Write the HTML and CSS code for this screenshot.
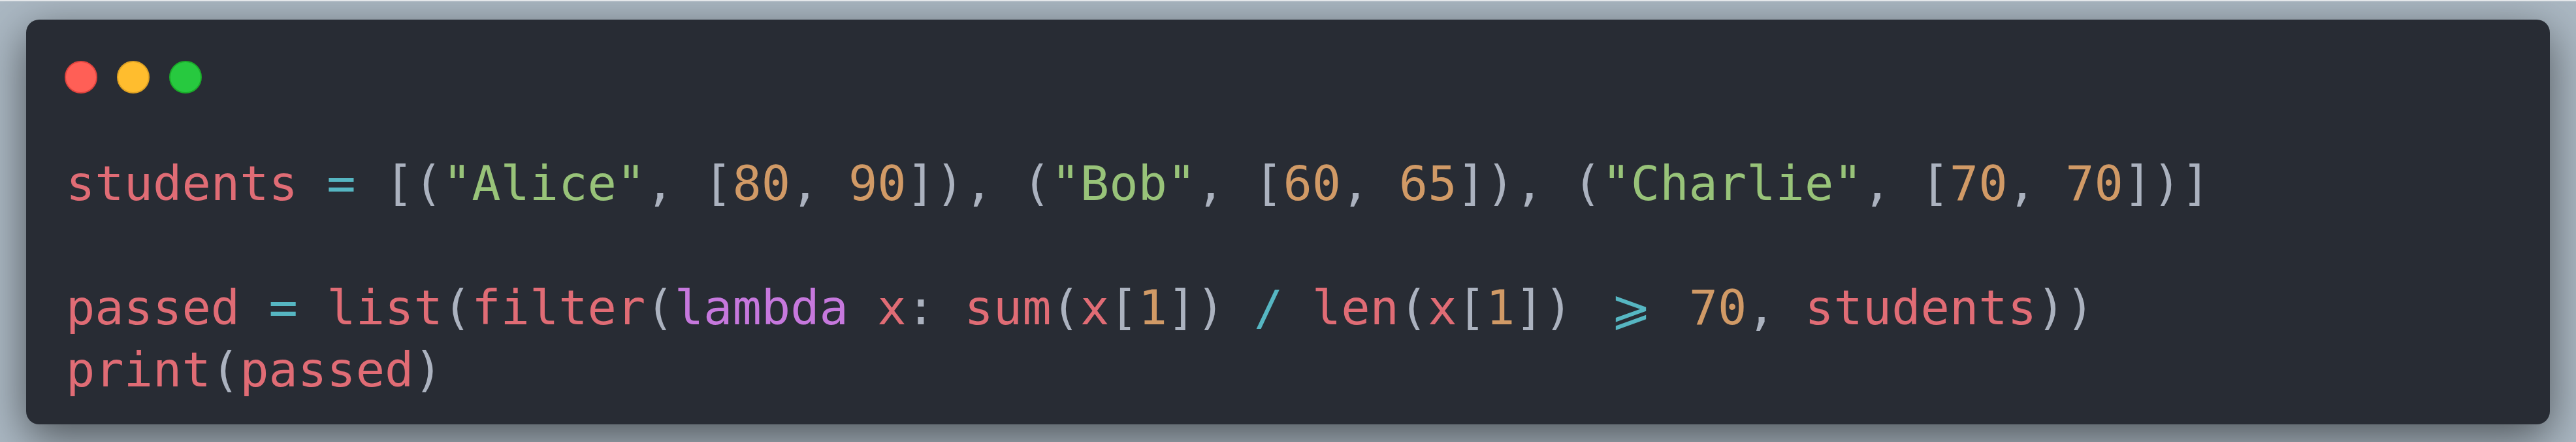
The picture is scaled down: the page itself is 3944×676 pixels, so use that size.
FILE: index.html
```html
<!DOCTYPE html>
<html lang="en">
<head>
<meta charset="utf-8">
<title>Code snippet</title>
<link rel="stylesheet" href="styles.css">
</head>
<body>
<div class="stage">
  <div class="window">
    <div class="controls">
      <span class="dot dot-red"></span>
      <span class="dot dot-yellow"></span>
      <span class="dot dot-green"></span>
    </div>
<pre class="code"><code><span class="v">students</span> <span class="op">=</span> <span class="p">[(</span><span class="s">"Alice"</span><span class="p">, [</span><span class="n">80</span><span class="p">, </span><span class="n">90</span><span class="p">]), (</span><span class="s">"Bob"</span><span class="p">, [</span><span class="n">60</span><span class="p">, </span><span class="n">65</span><span class="p">]), (</span><span class="s">"Charlie"</span><span class="p">, [</span><span class="n">70</span><span class="p">, </span><span class="n">70</span><span class="p">])]</span>

<span class="v">passed</span> <span class="op">=</span> <span class="v">list</span><span class="p">(</span><span class="v">filter</span><span class="p">(</span><span class="k">lambda</span> <span class="v">x</span><span class="p">:</span> <span class="v">sum</span><span class="p">(</span><span class="v">x</span><span class="p">[</span><span class="n">1</span><span class="p">])</span> <span class="op">/</span> <span class="v">len</span><span class="p">(</span><span class="v">x</span><span class="p">[</span><span class="n">1</span><span class="p">])</span> <span class="op lig">⩾</span> <span class="n">70</span><span class="p">,</span> <span class="v">students</span><span class="p">))</span>
<span class="v">print</span><span class="p">(</span><span class="v">passed</span><span class="p">)</span></code></pre>
  </div>
</div>
</body>
</html>
```
FILE: styles.css
```css
html, body {
  margin: 0;
  padding: 0;
}

body {
  background: #abb8c3;
  border-top: 2px solid #e4e7ea;
  overflow: hidden;
}

.stage {
  padding: 28px 40px 27px;
}

.window {
  background: #282c34;
  border-radius: 20px;
  box-shadow: 0 20px 68px rgba(0, 0, 0, 0.55);
  padding: 63px 59px 36px 59px;
}

.controls {
  display: flex;
  gap: 30px;
  height: 50px;
}

.dot {
  width: 50px;
  height: 50px;
  box-sizing: border-box;
  border-radius: 50%;
  border: 2px solid;
}

.dot-red {
  background: #ff5f56;
  border-color: #e0443e;
}

.dot-yellow {
  background: #ffbd2e;
  border-color: #dea123;
}

.dot-green {
  background: #27c93f;
  border-color: #1aab29;
}

.code {
  margin: 90px 0 0 2px;
  font-family: "DejaVu Sans Mono", "Liberation Mono", monospace;
  font-size: 73.7px;
  line-height: 95px;
  color: #abb2bf;
  white-space: pre;
}

.code code {
  font-family: inherit;
}

.v { color: #e06c75; }
.op { color: #56b6c2; }
.p { color: #abb2bf; }
.s { color: #98c379; }
.n { color: #d19a66; }
.k { color: #c678dd; }

.lig {
  display: inline-block;
  width: 2ch;
  text-align: center;
}
```
